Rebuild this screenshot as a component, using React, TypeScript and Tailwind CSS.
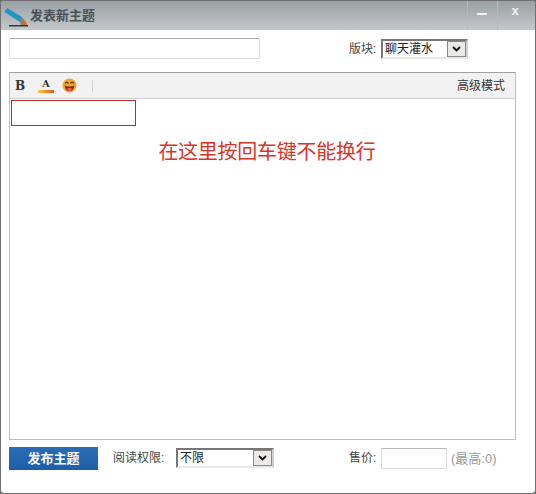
import React from "react";

function Chevron() {
  return (
    <svg width="9" height="6" viewBox="0 0 9 6" fill="none">
      <path d="M1 1 L4.5 4.5 L8 1" stroke="#111" strokeWidth="1.8" />
    </svg>
  );
}

function FakeSelect({ value, widthClass, arrowClass }: { value: string; widthClass: string; arrowClass: string }) {
  return (
    <div className={`${widthClass} h-5 flex items-stretch bg-white border-2 border-t-[#777] border-l-[#777] border-r-[#d0d0d0] border-b-[#e8e8e8]`}>
      <span className="flex-1 pl-[2px] text-[12px] leading-[17px] text-[#222]">{value}</span>
      <span className={`${arrowClass} flex items-center justify-center bg-[#eceae6] border border-[#888]`}>
        <Chevron />
      </span>
    </div>
  );
}

export default function App() {
  return (
    <div className="w-[536px] h-[494px] relative overflow-hidden bg-[#6a6a6a] font-['Liberation_Sans','Noto_Sans_CJK_SC',sans-serif] text-[12px] text-[#444]">
      <div className="h-full flex flex-col border border-[#707070] rounded-t-[4px] rounded-b-[4px] overflow-hidden bg-white">
        {/* title bar */}
        <div className="h-[29px] shrink-0 flex items-center justify-between bg-gradient-to-b from-[#9aa1a5] to-[#c3c8ca]">
          <div className="flex items-center pl-[3px] gap-[2px]">
            <svg width="24" height="22" viewBox="0 0 24 22">
              <path d="M0.5 7 L3 3 L18 12 L16 17 Z" fill="#1f95c4" />
              <path d="M18 12 L22 17 L23 20 L17 20 L16 17 Z" fill="#e2662c" />
              <path d="M18 12 L16 17 L17 20 L20 19 Z" fill="#7a8d70" />
              <rect x="5" y="20" width="19" height="1.5" fill="#2c3a40" />
            </svg>
            <span className="text-[13px] font-bold text-[#4a5055] pt-[1px]">发表新主题</span>
          </div>
          <div className="flex h-full">
            <div className="w-[30px] pr-[2px] flex justify-center items-start pt-[12px] border-l border-[#b4b9bb]">
              <div className="w-[10px] h-[2px] bg-[#eef0f1]" />
            </div>
            <div className="w-[38px] pr-[3px] flex justify-center items-center border-l border-[#b4b9bb] text-[#eef0f1] font-bold text-[13px] pb-[9px]">
              x
            </div>
          </div>
        </div>

        {/* subject row */}
        <div className="h-[42px] shrink-0 flex items-start justify-between pl-2 pr-[67px] pt-[8px]">
          <input className="w-[251px] h-[21px] bg-white border border-[#dcdcdc] border-t-[#a8a8a8] rounded-[2px] outline-none" />
          <div className="flex items-center gap-[4px] mt-px">
            <span className="w-[28px] text-[12px] text-[#444]">版块:</span>
            <FakeSelect value="聊天灌水" widthClass="w-[87px]" arrowClass="w-[19px]" />
          </div>
        </div>

        {/* editor */}
        <div className="ml-2 mr-[19px] h-[368px] shrink-0 flex flex-col border border-[#bdbdbd] border-t-[#a0a0a0]">
          <div className="h-[26px] shrink-0 flex items-center justify-between bg-[#f2f2f2] border-b border-[#cfcfcf] pl-[5px] pr-[10px]">
            <div className="flex items-center">
              <span className="w-[11px] font-['DejaVu_Serif',serif] font-bold text-[12px] text-[#333] leading-none">B</span>
              <div className="ml-[12px] flex flex-col items-center w-4">
                <span className="font-['DejaVu_Serif',serif] font-bold text-[10px] leading-[11px] text-[#333]">A</span>
                <div className="w-4 h-[3px] bg-gradient-to-r from-[#f3c64a] to-[#dd5a22] mt-[1px]" />
              </div>
              <svg className="ml-[8px]" width="15" height="15" viewBox="0 0 15 15">
                <circle cx="7.5" cy="7.5" r="7" fill="#f0a82c" />
                <path d="M3.2 5.5 Q5 2.8 6.5 5.5" stroke="#4a3010" strokeWidth="1.3" fill="none" />
                <path d="M8.5 5.5 Q10 2.8 11.8 5.5" stroke="#4a3010" strokeWidth="1.3" fill="none" />
                <path d="M2.5 7.5 Q7.5 9.5 12.5 7.5 Q11.5 13 7.5 13 Q3.5 13 2.5 7.5 Z" fill="#8a2a10" />
                <path d="M5 10.5 Q7.5 9.5 10 10.5 Q9 13 7.5 13 Q6 13 5 10.5 Z" fill="#ea6a50" />
              </svg>
              <div className="ml-[15px] w-px h-3 bg-[#d4d4d4]" />
            </div>
            <span className="text-[12px] text-[#333]">高级模式</span>
          </div>
          <div className="flex-1 bg-white pl-px pt-px">
            <div className="w-[125px] h-[26px] border border-[#c0272d]" />
            <div className="mt-[13px] pl-[8px] text-center text-[20px] tracking-[-0.25px] leading-[26px] text-[#d8352a]">在这里按回车键不能换行</div>
          </div>
        </div>

        {/* bottom row */}
        <div className="flex-1 flex items-start pl-2 pt-[7px]">
          <button className="w-[89px] h-[23px] bg-gradient-to-b from-[#2a6db5] to-[#1d5ea8] text-white font-bold text-[13px] leading-[23px] text-center">发布主题</button>
          <span className="ml-[15px] w-[63px] h-[23px] leading-[23px] text-[12px] text-[#444]">阅读权限:</span>
          <div className="mt-px">
            <FakeSelect value="不限" widthClass="w-[98px]" arrowClass="w-[19px]" />
          </div>
          <span className="ml-[75px] w-[32px] h-[23px] leading-[23px] text-[12px] text-[#444]">售价:</span>
          <input className="mt-px w-[66px] h-[21px] bg-white border border-[#dcdcdc] border-t-[#b8b8b8] rounded-[1px] outline-none" />
          <span className="ml-[4px] h-[23px] leading-[23px] text-[13px] text-[#999]">(最高:0)</span>
        </div>
      </div>
    </div>
  );
}
